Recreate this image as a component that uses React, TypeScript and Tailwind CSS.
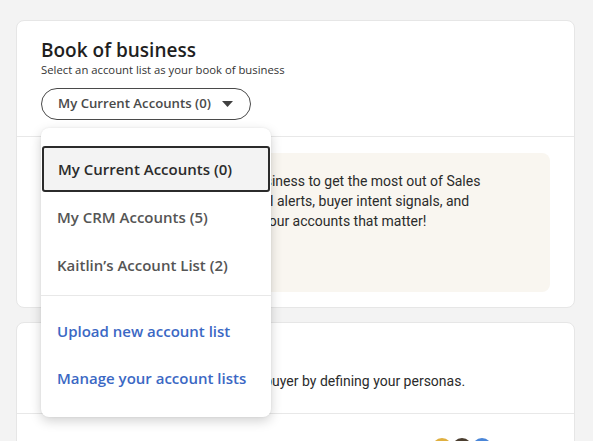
const lists = [
  { label: "My Current Accounts (0)", selected: true },
  { label: "My CRM Accounts (5)", selected: false },
  { label: "Kaitlin’s Account List (2)", selected: false },
];

const actions = ["Upload new account list", "Manage your account lists"];

function Caret() {
  return (
    <svg width="11" height="6" viewBox="0 0 11 6" className="ml-[11px]">
      <path d="M0 0 L11 0 L5.5 6 Z" fill="#404040" />
    </svg>
  );
}

function AccountMenu() {
  return (
    <div className="absolute left-0 top-[40px] z-20 w-[230px] rounded-lg bg-white pt-[18px] pb-[15px] shadow-[0_4px_12px_rgba(0,0,0,0.18),0_0_2px_rgba(0,0,0,0.08)]">
      <ul>
        {lists.map((item) => (
          <li
            key={item.label}
            className={
              item.selected
                ? "mx-px flex h-[46px] items-center rounded-[3px] border-2 border-[#2b2b2b] bg-[#f3f3f3] px-[14px] text-[15px] font-semibold text-[#2b2b2b]"
                : "mt-[2px] flex h-[46px] items-center px-4 text-[15px] font-semibold text-[#555555]"
            }
          >
            {item.label}
          </li>
        ))}
      </ul>
      <div className="mt-[7px] border-t border-[#e8e8e8]" />
      <ul className="mt-[12px]">
        {actions.map((a) => (
          <li key={a} className="flex h-[47px] items-center px-4 text-[15px] font-semibold text-[#3b68c4]">
            {a}
          </li>
        ))}
      </ul>
    </div>
  );
}

export default function App() {
  return (
    <div className="h-[441px] overflow-hidden bg-[#f3f3f3] pl-4 pr-[18px] pt-5 text-[#2b2b2b] [font-family:'Open_Sans','Noto_Sans',sans-serif]">
      <section className="rounded-lg border border-[#e6e6e6] bg-white">
        <header className="border-b border-[#e8e8e8] px-6 pt-[17px] pb-[16px]">
          <h1 className="text-[19px] font-semibold leading-6 text-[#1f1f1f]">Book of business</h1>
          <p className="text-[11.3px] leading-4 text-[#333]">Select an account list as your book of business</p>
          <div className="relative mt-[10px] w-fit">
            <button className="flex h-8 items-center rounded-full border border-[#4a4a4a] pl-4 pr-[17px] text-[13.2px] font-semibold text-[#4a4a4a]">
              My Current Accounts (0)
              <Caret />
            </button>
            <AccountMenu />
          </div>
        </header>
        <div className="px-6 pt-4 pb-[15px]">
          <div className="flex h-[139px] gap-[13px] rounded-lg bg-[#f9f6f0] px-6 pt-[18px] text-[14px] leading-5 text-[#2b2b2b] [font-family:Roboto,sans-serif]">
            <svg width="48" height="48" viewBox="0 0 48 48" className="mt-1 shrink-0">
              <rect x="4" y="8" width="40" height="32" rx="4" fill="#e9dfcf" />
              <rect x="10" y="16" width="20" height="3" rx="1.5" fill="#c9b89c" />
              <rect x="10" y="24" width="28" height="3" rx="1.5" fill="#c9b89c" />
            </svg>
            <div>
              <p className="whitespace-nowrap">
                Select your book of business to get the most out of Sales
                <br />
                Navigator with personal alerts, buyer intent signals, and
                <br />
                recommendations on your accounts that matter!
              </p>
              <button className="mt-4 flex h-8 items-center rounded-full bg-[#0a66c2] px-4 text-[14px] font-medium text-white">
                Get started
              </button>
            </div>
          </div>
        </div>
      </section>

      <section className="mt-[14px] rounded-lg border border-[#e6e6e6] bg-white">
        <div className="border-b border-[#e8e8e8] px-6 pt-5 pb-[22px]">
          <h2 className="text-[19px] font-semibold leading-6">Buyer personas</h2>
          <p className="mt-1 text-[14px] leading-5 [font-family:Roboto,sans-serif]">
            Get great leads matching your ideal buyer by defining your personas.
          </p>
        </div>
        <div className="flex h-[40px] items-start justify-end px-6 pt-6 pr-[82px]">
          <div className="flex">
            <span className="h-5 w-5 rounded-full bg-[#e0b040]" />
            <span className="h-5 w-5 rounded-full bg-[#4a3e30]" />
            <span className="h-5 w-5 rounded-full bg-[#4a86d8]" />
          </div>
        </div>
      </section>
    </div>
  );
}
